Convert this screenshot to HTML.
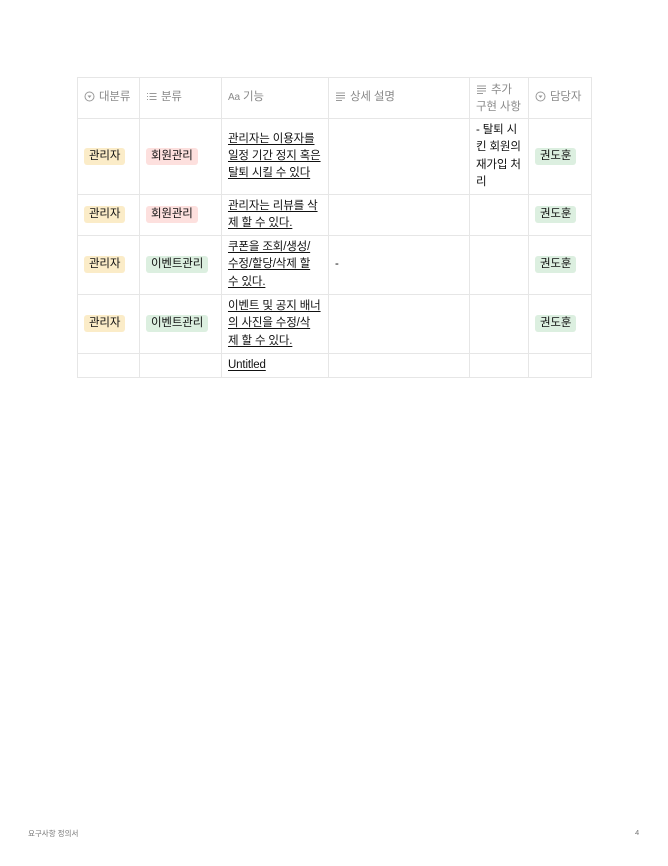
<!DOCTYPE html>
<html><head><meta charset="utf-8"><style>
body{margin:0;width:668px;height:866px;background:#fff;position:relative;font-family:"Liberation Sans","Noto Sans CJK KR",sans-serif;color:#111;}
table{position:absolute;left:77px;top:77px;border-collapse:collapse;table-layout:fixed;width:514px;font-size:11.5px;letter-spacing:-0.15px;}
td,th{border:1px solid #e6e6e6;padding:0 0 0 6px;vertical-align:middle;text-align:left;font-weight:normal;line-height:17.3px;white-space:nowrap;overflow:hidden;}
th{color:#8a8a8a;height:38px;}
th svg{vertical-align:-2px;margin-right:4px}
.t{display:inline-block;padding:0 5px;border-radius:3px;line-height:17px;}
.y{background:#fbecc8}.r{background:#fde0de}.g{background:#dcefe0}
u{text-decoration:underline;text-underline-offset:2px}
.foot{position:absolute;top:828px;font-size:7.5px;color:#777}
</style></head><body>
<table>
<colgroup><col style="width:62px"><col style="width:82px"><col style="width:107px"><col style="width:141px"><col style="width:59px"><col style="width:63px"></colgroup>
<tr><th><svg width="11" height="11" viewBox="0 0 11 11"><circle cx="5.5" cy="5.5" r="4.5" fill="none" stroke="#999"/><path d="M3.5 4.5h4l-2 2.5z" fill="#999"/></svg>대분류</th>
<th><svg width="11" height="11" viewBox="0 0 11 11" stroke="#999"><path d="M1 2.5h1M1 5.5h1M1 8.5h1M3.5 2.5h7M3.5 5.5h7M3.5 8.5h7"/></svg>분류</th>
<th><span style="font-size:10px;margin-right:3px">Aa</span>기능</th>
<th><svg width="11" height="11" viewBox="0 0 11 11" stroke="#999"><path d="M1 2h9M1 4.5h9M1 7h9M1 9.5h6"/></svg>상세 설명</th>
<th style="padding-top:2px"><svg width="11" height="11" viewBox="0 0 11 11" stroke="#999"><path d="M1 2h9M1 4.5h9M1 7h9M1 9.5h6"/></svg>추가<br>구현 사항</th>
<th><svg width="11" height="11" viewBox="0 0 11 11"><circle cx="5.5" cy="5.5" r="4.5" fill="none" stroke="#999"/><path d="M3.5 4.5h4l-2 2.5z" fill="#999"/></svg>담당자</th></tr>
<tr style="height:76px"><td><span class="t y">관리자</span></td><td><span class="t r">회원관리</span></td><td><u>관리자는 이용자를<br>일정 기간 정지 혹은<br>탈퇴 시킬 수 있다</u></td><td></td><td>- 탈퇴 시<br>킨 회원의<br>재가입 처<br>리</td><td><span class="t g">권도훈</span></td></tr>
<tr style="height:41px"><td><span class="t y">관리자</span></td><td><span class="t r">회원관리</span></td><td><u>관리자는 리뷰를 삭<br>제 할 수 있다.</u></td><td></td><td></td><td><span class="t g">권도훈</span></td></tr>
<tr style="height:59px"><td><span class="t y">관리자</span></td><td><span class="t g">이벤트관리</span></td><td><u>쿠폰을 조회/생성/<br>수정/할당/삭제 할<br>수 있다.</u></td><td>-</td><td></td><td><span class="t g">권도훈</span></td></tr>
<tr style="height:59px"><td><span class="t y">관리자</span></td><td><span class="t g">이벤트관리</span></td><td><u>이벤트 및 공지 배너<br>의 사진을 수정/삭<br>제 할 수 있다.</u></td><td></td><td></td><td><span class="t g">권도훈</span></td></tr>
<tr style="height:24px"><td></td><td></td><td><u>Untitled</u></td><td></td><td></td><td></td></tr>
</table>
<div class="foot" style="left:28px">요구사항 정의서</div>
<div class="foot" style="left:635px">4</div>
</body></html>
